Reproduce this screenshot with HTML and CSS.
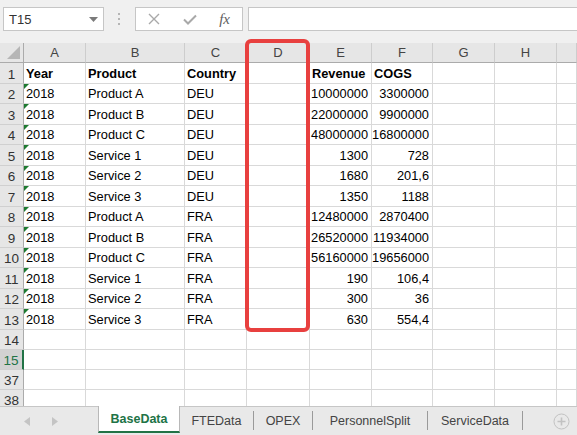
FILE: index.html
```html
<!DOCTYPE html>
<html lang="en">
<head>
    <meta charset="UTF-8">
    <title>BaseData</title>
    <link rel="stylesheet" href="styles.css">
</head>
<body>
    <div class="toolbar">
        <div class="namebox">
            <span>T15</span>
            <svg width="9" height="5" viewBox="0 0 9 5"><polygon points="0,0 9,0 4.5,5" fill="#7a7a7a"/></svg>
        </div>
        <div class="grip">
            <svg width="3" height="13" viewBox="0 0 3 13"><rect x="0" y="0" width="2" height="2" fill="#b5b5b5"/><rect x="0" y="5" width="2" height="2" fill="#b5b5b5"/><rect x="0" y="10" width="2" height="2" fill="#b5b5b5"/></svg>
        </div>
        <div class="fbuttons">
            <svg width="12" height="12" viewBox="0 0 12 12"><path d="M1 1 L11 11 M11 1 L1 11" stroke="#a9a9a9" stroke-width="1.4" fill="none"/></svg>
            <svg width="14" height="11" viewBox="0 0 14 11"><path d="M1 5.5 L5 9.5 L13 1.5" stroke="#a9a9a9" stroke-width="2" fill="none"/></svg>
            <span class="fx">fx</span>
        </div>
        <div class="formula"></div>
    </div>

    <div class="sheet">
        <div class="corner"><svg width="13" height="13" viewBox="0 0 13 13"><polygon points="13,0 13,13 0,13" fill="#b6b6b6"/></svg></div>
        <div class="ch">A</div><div class="ch">B</div><div class="ch">C</div><div class="ch">D</div><div class="ch">E</div><div class="ch">F</div><div class="ch">G</div><div class="ch">H</div><div class="ch"></div>

        <div class="rh">1</div><div class="c b">Year</div><div class="c b">Product</div><div class="c b">Country</div><div class="c"></div><div class="c b">Revenue</div><div class="c b">COGS</div><div class="c"></div><div class="c"></div><div class="c"></div>
        <div class="rh">2</div><div class="c t">2018</div><div class="c">Product A</div><div class="c">DEU</div><div class="c"></div><div class="c n">10000000</div><div class="c n">3300000</div><div class="c"></div><div class="c"></div><div class="c"></div>
        <div class="rh">3</div><div class="c t">2018</div><div class="c">Product B</div><div class="c">DEU</div><div class="c"></div><div class="c n">22000000</div><div class="c n">9900000</div><div class="c"></div><div class="c"></div><div class="c"></div>
        <div class="rh">4</div><div class="c t">2018</div><div class="c">Product C</div><div class="c">DEU</div><div class="c"></div><div class="c n">48000000</div><div class="c n">16800000</div><div class="c"></div><div class="c"></div><div class="c"></div>
        <div class="rh">5</div><div class="c t">2018</div><div class="c">Service 1</div><div class="c">DEU</div><div class="c"></div><div class="c n">1300</div><div class="c n">728</div><div class="c"></div><div class="c"></div><div class="c"></div>
        <div class="rh">6</div><div class="c t">2018</div><div class="c">Service 2</div><div class="c">DEU</div><div class="c"></div><div class="c n">1680</div><div class="c n">201,6</div><div class="c"></div><div class="c"></div><div class="c"></div>
        <div class="rh">7</div><div class="c t">2018</div><div class="c">Service 3</div><div class="c">DEU</div><div class="c"></div><div class="c n">1350</div><div class="c n">1188</div><div class="c"></div><div class="c"></div><div class="c"></div>
        <div class="rh">8</div><div class="c t">2018</div><div class="c">Product A</div><div class="c">FRA</div><div class="c"></div><div class="c n">12480000</div><div class="c n">2870400</div><div class="c"></div><div class="c"></div><div class="c"></div>
        <div class="rh">9</div><div class="c t">2018</div><div class="c">Product B</div><div class="c">FRA</div><div class="c"></div><div class="c n">26520000</div><div class="c n">11934000</div><div class="c"></div><div class="c"></div><div class="c"></div>
        <div class="rh">10</div><div class="c t">2018</div><div class="c">Product C</div><div class="c">FRA</div><div class="c"></div><div class="c n">56160000</div><div class="c n">19656000</div><div class="c"></div><div class="c"></div><div class="c"></div>
        <div class="rh">11</div><div class="c t">2018</div><div class="c">Service 1</div><div class="c">FRA</div><div class="c"></div><div class="c n">190</div><div class="c n">106,4</div><div class="c"></div><div class="c"></div><div class="c"></div>
        <div class="rh">12</div><div class="c t">2018</div><div class="c">Service 2</div><div class="c">FRA</div><div class="c"></div><div class="c n">300</div><div class="c n">36</div><div class="c"></div><div class="c"></div><div class="c"></div>
        <div class="rh">13</div><div class="c t">2018</div><div class="c">Service 3</div><div class="c">FRA</div><div class="c"></div><div class="c n">630</div><div class="c n">554,4</div><div class="c"></div><div class="c"></div><div class="c"></div>
        <div class="rh">14</div><div class="c"></div><div class="c"></div><div class="c"></div><div class="c"></div><div class="c"></div><div class="c"></div><div class="c"></div><div class="c"></div><div class="c"></div>
        <div class="rh sel">15</div><div class="c"></div><div class="c"></div><div class="c"></div><div class="c"></div><div class="c"></div><div class="c"></div><div class="c"></div><div class="c"></div><div class="c"></div>
        <div class="rh">37</div><div class="c"></div><div class="c"></div><div class="c"></div><div class="c"></div><div class="c"></div><div class="c"></div><div class="c"></div><div class="c"></div><div class="c"></div>
        <div class="rh">38</div><div class="c"></div><div class="c"></div><div class="c"></div><div class="c"></div><div class="c"></div><div class="c"></div><div class="c"></div><div class="c"></div><div class="c"></div>
    </div>

    <div class="tabbar">
        <div class="tabnav">
            <svg width="6" height="9" viewBox="0 0 6 9"><polygon points="6,0 6,9 0,4.5" fill="#c4c4c4"/></svg>
            <svg width="6" height="9" viewBox="0 0 6 9"><polygon points="0,0 0,9 6,4.5" fill="#c4c4c4"/></svg>
        </div>
        <div class="tab active">BaseData</div>
        <div class="tab">FTEData</div>
        <div class="tab">OPEX</div>
        <div class="tab">PersonnelSplit</div>
        <div class="tab">ServiceData</div>
        <div class="addsheet">
            <svg width="17" height="17" viewBox="0 0 17 17"><circle cx="8.5" cy="8.5" r="7.5" stroke="#c2c2c2" stroke-width="1" fill="none"/><path d="M8.5 4.5 V12.5 M4.5 8.5 H12.5" stroke="#c2c2c2" stroke-width="1.6"/></svg>
        </div>
    </div>

    <!-- highlight drawn over column D -->
    <div class="highlight"></div>
</body>
</html>
```

FILE: styles.css
```css
body {
    margin: 0;
    width: 577px;
    height: 435px;
    overflow: hidden;
    position: relative;
    display: flex;
    flex-direction: column;
    font-family: "Liberation Sans", Arial, sans-serif;
    background-color: #f0f0f0;
}
.toolbar {
    height: 43px;
    flex: none;
    display: flex;
    align-items: flex-start;
    padding-top: 7px;
    box-sizing: border-box;
    background-color: #f0f0f0;
}
.namebox {
    margin-left: 3px;
    width: 101px;
    height: 24px;
    box-sizing: border-box;
    background-color: white;
    border: 1px solid #c6c6c6;
    display: flex;
    align-items: center;
    justify-content: space-between;
    padding: 0 5px 0 5px;
    font-size: 13px;
    color: #333;
}
.grip {
    width: 31px;
    height: 24px;
    display: flex;
    align-items: center;
    justify-content: center;
}
.fbuttons {
    width: 108px;
    height: 24px;
    box-sizing: border-box;
    background-color: white;
    border: 1px solid #c6c6c6;
    display: flex;
    align-items: center;
    padding: 0 12px 0 12px;
    justify-content: space-between;
}
.fx {
    font-family: "Liberation Serif", serif;
    font-style: italic;
    font-size: 15px;
    color: #606060;
}
.formula {
    flex: 1;
    margin-left: 5px;
    height: 24px;
    box-sizing: border-box;
    background-color: white;
    border: 1px solid #c6c6c6;
    border-right: none;
}
.sheet {
    flex: 1;
    overflow: hidden;
    display: grid;
    grid-template-columns: 24px 62px 99px 62px 63px 62px 61px 62px 62px 1fr;
    grid-template-rows: 20px repeat(13, 20.5px) repeat(4, 20px);
    background-color: white;
    font-size: 12.8px;
}
.sheet > div {
    box-sizing: border-box;
    white-space: nowrap;
    overflow: hidden;
}
.corner {
    background-color: #e6e6e6;
    border-right: 1px solid #ababab;
    border-bottom: 1px solid #ababab;
    display: flex;
    align-items: flex-end;
    justify-content: flex-end;
    padding: 0 3px 3px 0;
}
.ch {
    background-color: #e6e6e6;
    border-bottom: 1px solid #ababab;
    border-right: 1px solid #cdcdcd;
    color: #444;
    display: flex;
    align-items: center;
    justify-content: center;
    font-size: 13px;
}
.rh {
    background-color: #e6e6e6;
    border-right: 1px solid #ababab;
    border-bottom: 1px solid #d0d0d0;
    color: #333;
    display: flex;
    align-items: flex-end;
    justify-content: center;
    padding-bottom: 1px;
    font-size: 13.5px;
}
.rh.sel {
    background-color: #d2d2d2;
    color: #217346;
    border-right: 2px solid #217346;
}
.c {
    border-right: 1px solid #d9d9d9;
    border-bottom: 1px solid #d9d9d9;
    display: flex;
    align-items: flex-end;
    padding: 0 3px 2px 2px;
    color: black;
    position: relative;
}
.c.b {
    font-weight: bold;
}
.c.n {
    justify-content: flex-end;
}
/* text-stored number marker */
.c.t::before {
    content: "";
    position: absolute;
    top: 0;
    left: 0;
    border-top: 5px solid #1d7a30;
    border-right: 5px solid transparent;
}
.tabbar {
    height: 29px;
    flex: none;
    display: flex;
    align-items: stretch;
    background-color: #e9e9e9;
    border-top: 1px solid #c6c6c6;
    box-sizing: border-box;
    font-size: 12.5px;
    color: #444;
}
.tabnav {
    width: 98px;
    display: flex;
    align-items: center;
    padding-left: 24px;
    gap: 22px;
    box-sizing: border-box;
}
.tab {
    display: flex;
    align-items: center;
    justify-content: center;
    margin: 4px 0 5px 0;
    border-right: 1px solid #9a9a9a;
}
.tab:nth-child(3) { width: 73px; }
.tab:nth-child(4) { width: 58px; }
.tab:nth-child(5) { width: 114px; }
.tab:nth-child(6) { width: 94px; }
.tab.active {
    width: 82px;
    margin: -1px 0 2px 0;
    background-color: white;
    border-left: 1px solid #b8b8b8;
    border-right: 1px solid #b8b8b8;
    border-bottom: 2px solid #217346;
    color: #217346;
    font-weight: bold;
    padding-top: 1px;
    box-sizing: border-box;
}
.addsheet {
    flex: 1;
    display: flex;
    align-items: center;
    justify-content: flex-end;
    padding-right: 7px;
}
.highlight {
    position: absolute;
    left: 245px;
    top: 39px;
    width: 65px;
    height: 293px;
    box-sizing: border-box;
    border: 4px solid #e8403f;
    border-radius: 6px;
}
```
